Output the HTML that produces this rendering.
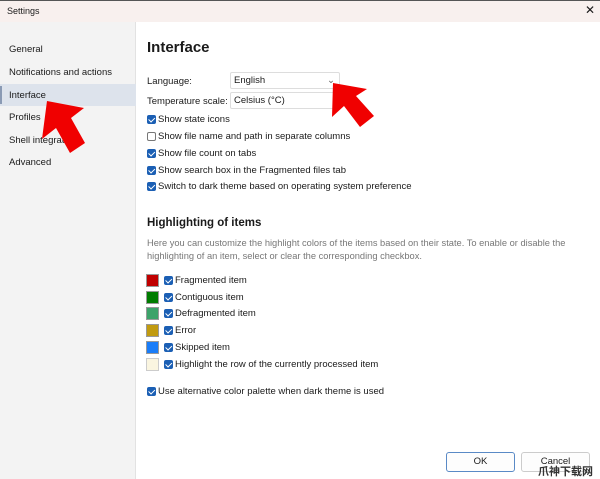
<!DOCTYPE html>
<html><head><meta charset="utf-8"><style>
*{margin:0;padding:0;box-sizing:border-box}
body{width:600px;height:479px;overflow:hidden;background:#fff;font-family:"Liberation Sans",sans-serif;font-size:9.5px;color:#1a1a1a;position:relative}
.t{position:absolute;white-space:nowrap}
#title{position:absolute;left:0;top:0;width:600px;height:22px;background:#f8f0ee;border-top:1px solid #555}
#side{position:absolute;left:0;top:22px;width:136px;height:457px;background:#f3f3f3;border-right:1px solid #e2e2e2}
.nav{position:absolute;left:9px;font-size:9.5px}
.cb{position:absolute;width:9px;height:9px;border-radius:2px;background:#1b5fb4}
.cb:after{content:"";position:absolute;left:2.5px;top:1px;width:2.5px;height:4.5px;border:solid #fff;border-width:0 1.2px 1.2px 0;transform:rotate(45deg)}
.cb.off{background:#fff;border:1px solid #777}.cb.off:after{display:none}
.sw{position:absolute;left:146px;width:13px;height:13px;border:1px solid #999}
.dd{position:absolute;left:230px;width:110px;height:17px;border:1px solid #ddd;border-radius:2px;padding:2px 3px;font-size:9.5px}
.btn{position:absolute;top:452px;width:69px;height:20px;border:1px solid #ccc;border-radius:3px;text-align:center;line-height:18px;font-size:9.5px;background:#fdfdfd}
</style></head><body>
<div id="title"></div>
<div class="t" style="left:7px;top:6px;font-size:9px">Settings</div>
<div class="t" style="left:585px;top:3px;font-size:12px">✕</div>
<div id="side"></div>
<div style="position:absolute;left:0;top:84px;width:136px;height:22px;background:#dde3ec"></div>
<div style="position:absolute;left:0;top:86px;width:2px;height:18px;background:#8a9ab4"></div>
<div class="nav t" style="top:44px">General</div>
<div class="nav t" style="top:67px">Notifications and actions</div>
<div class="nav t" style="top:90px">Interface</div>
<div class="nav t" style="top:112px">Profiles</div>
<div class="nav t" style="top:135px">Shell integrati</div>
<div class="nav t" style="top:157px">Advanced</div>

<div class="t" style="left:147px;top:39px;font-size:15px;font-weight:bold">Interface</div>
<div class="t" style="left:147px;top:76px">Language:</div>
<div class="dd" style="top:72px">English<span style="position:absolute;right:4px;top:2px;color:#666">⌄</span></div>
<div class="t" style="left:147px;top:96px">Temperature scale:</div>
<div class="dd" style="top:92px">Celsius (°C)</div>
<div class="cb" style="left:147px;top:115px"></div><div class="t" style="left:158px;top:114px">Show state icons</div>
<div class="cb off" style="left:147px;top:132px"></div><div class="t" style="left:158px;top:131px">Show file name and path in separate columns</div>
<div class="cb" style="left:147px;top:149px"></div><div class="t" style="left:158px;top:148px">Show file count on tabs</div>
<div class="cb" style="left:147px;top:166px"></div><div class="t" style="left:158px;top:165px">Show search box in the Fragmented files tab</div>
<div class="cb" style="left:147px;top:182px"></div><div class="t" style="left:158px;top:181px">Switch to dark theme based on operating system preference</div>

<div class="t" style="left:147px;top:217px;font-size:11.5px;font-weight:bold">Highlighting of items</div>
<div class="t" style="left:147px;top:238px;color:#777;font-size:9.3px">Here you can customize the highlight colors of the items based on their state. To enable or disable the</div>
<div class="t" style="left:147px;top:251px;color:#777;font-size:9.3px">highlighting of an item, select or clear the corresponding checkbox.</div>

<div class="sw" style="top:274px;background:#c00000"></div><div class="cb" style="left:164px;top:276px"></div><div class="t" style="left:175px;top:275px">Fragmented item</div>
<div class="sw" style="top:291px;background:#007c00"></div><div class="cb" style="left:164px;top:293px"></div><div class="t" style="left:175px;top:292px">Contiguous item</div>
<div class="sw" style="top:307px;background:#3ca36a"></div><div class="cb" style="left:164px;top:309px"></div><div class="t" style="left:175px;top:308px">Defragmented item</div>
<div class="sw" style="top:324px;background:#c19b10"></div><div class="cb" style="left:164px;top:326px"></div><div class="t" style="left:175px;top:325px">Error</div>
<div class="sw" style="top:341px;background:#1a7df8"></div><div class="cb" style="left:164px;top:343px"></div><div class="t" style="left:175px;top:342px">Skipped item</div>
<div class="sw" style="top:358px;background:#faf5e0;border-color:#ccc"></div><div class="cb" style="left:164px;top:360px"></div><div class="t" style="left:175px;top:359px">Highlight the row of the currently processed item</div>
<div class="cb" style="left:147px;top:387px"></div><div class="t" style="left:158px;top:386px">Use alternative color palette when dark theme is used</div>

<div class="btn" style="left:446px;border-color:#5a8ac6">OK</div>
<div class="btn" style="left:521px">Cancel</div>
<div class="t" style="left:538px;top:463px;font-size:11px;font-weight:bold;color:#333;font-family:'Liberation Sans','Noto Sans CJK SC',sans-serif">爪神下载网</div>

<svg style="position:absolute;left:0;top:0" width="600" height="479">
<polygon fill="#f00000" points="47,101 42,139 56,128 70,153 85,143 71,118 84,108"/>
<polygon fill="#f00000" points="333,83 332,117 344,106 360,127 374,116 356,96 367,89"/>
</svg>
</body></html>
